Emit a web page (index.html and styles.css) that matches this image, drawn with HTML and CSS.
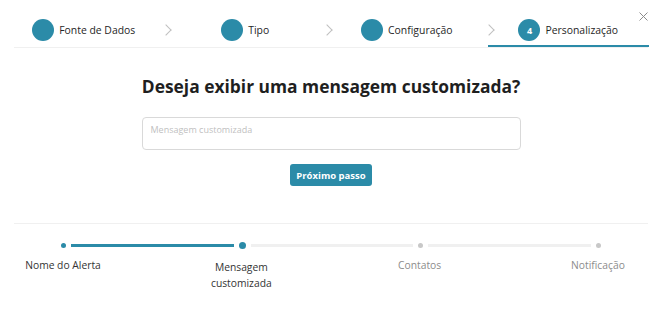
FILE: index.html
```html
<!DOCTYPE html>
<html lang="pt-BR">
<head>
  <meta charset="UTF-8" />
  <meta name="viewport" content="width=device-width, initial-scale=1.0" />
  <title>Personalização do alerta</title>
  <link rel="stylesheet" href="styles.css">
</head>
<body>
  <div class="modal">
    <!-- 닫기 버튼 -->
    <button class="close" aria-label="Fechar">
      <svg width="9" height="9" viewBox="0 0 9 9"><path d="M0.5 0.5 L8.5 8.5 M8.5 0.5 L0.5 8.5" stroke="#8c8c8c" stroke-width="1" fill="none"/></svg>
    </button>

    <!-- 상단 단계 -->
    <div class="nav-steps">
      <div class="nav-list">
        <div class="nav-item"><span class="nav-icon"></span><span class="nav-title">Fonte de Dados</span></div>
        <div class="nav-item"><span class="nav-icon"></span><span class="nav-title">Tipo</span></div>
        <div class="nav-item"><span class="nav-icon"></span><span class="nav-title">Configuração</span></div>
        <div class="nav-item active"><span class="nav-icon">4</span><span class="nav-title">Personalização</span></div>
      </div>
    </div>

    <!-- 본문 -->
    <div class="content">
      <h1>Deseja exibir uma mensagem customizada?</h1>
      <textarea class="message" placeholder="Mensagem customizada"></textarea>
      <button class="button">Próximo passo</button>
    </div>

    <!-- 하단 진행 -->
    <div class="progress">
      <div class="track">
        <span class="dot done"></span>
        <span class="line done"></span>
        <span class="dot current"></span>
        <span class="line"></span>
        <span class="dot"></span>
        <span class="line"></span>
        <span class="dot"></span>
      </div>
      <div class="labels">
        <div class="label done">Nome do Alerta</div>
        <div class="label current">Mensagem customizada</div>
        <div class="label">Contatos</div>
        <div class="label">Notificação</div>
      </div>
    </div>
  </div>
</body>
</html>
```

FILE: styles.css
```css
:root {
  --primary: #2b8ba8;
  --text-primary: #1f1f1f;
  --text-secondary: #595959;
  --text-muted: #8c8c8c;
  --border: #d9d9d9;
  --divider: #f0f0f0;
}
* {
  box-sizing: border-box;
  margin: 0;
  padding: 0;
}
body {
  font-family: "Open Sans", "Noto Sans", sans-serif;
  background: #ffffff;
  color: var(--text-primary);
}
.modal {
  position: relative;
  width: 662px;
  height: 325px;
}
.close {
  position: absolute;
  top: 12px;
  right: 14px;
  border: none;
  background: none;
  cursor: pointer;
  line-height: 0;
}
/* 상단 단계 */
.nav-steps {
  margin: 0 14px;
  border-bottom: 1px solid var(--divider);
}
.nav-list {
  display: flex;
  margin-left: -11px;
  width: 646px;
}
.nav-item {
  position: relative;
  flex: 1;
  display: flex;
  align-items: center;
  justify-content: center;
  gap: 5px;
  padding: 19px 0 4px;
  border-bottom: 2px solid transparent;
}
.nav-item:not(:last-child)::after {
  content: "";
  position: absolute;
  top: 26px;
  right: -5px;
  width: 7px;
  height: 7px;
  border-top: 1px solid #bfbfbf;
  border-right: 1px solid #bfbfbf;
  transform: rotate(45deg);
}
.nav-item.active {
  border-bottom-color: var(--primary);
}
.nav-icon {
  width: 22px;
  height: 22px;
  border-radius: 50%;
  background: var(--primary);
  color: #ffffff;
  font-size: 9px;
  font-weight: 700;
  display: flex;
  align-items: center;
  justify-content: center;
}
.nav-title {
  font-size: 10.4px;
  color: #262626;
  white-space: nowrap;
}
/* 본문 */
.content {
  display: flex;
  flex-direction: column;
  align-items: center;
  margin: 0 14px;
  padding: 26px 0 37px;
  border-bottom: 1px solid var(--divider);
}
h1 {
  font-size: 17.4px;
  font-weight: 700;
  line-height: 24px;
  color: var(--text-primary);
  margin-bottom: 19px;
}
.message {
  width: 379px;
  height: 33px;
  padding: 5px 8px;
  border: 1px solid var(--border);
  border-radius: 4px;
  resize: none;
  font-family: inherit;
  font-size: 9px;
  color: var(--text-primary);
  margin-bottom: 14px;
}
.message::placeholder {
  color: #bfbfbf;
}
.button {
  width: 82px;
  height: 22px;
  border: none;
  border-radius: 3px;
  background: var(--primary);
  color: #ffffff;
  font-family: inherit;
  font-size: 9.5px;
  font-weight: 700;
  cursor: pointer;
}
/* 하단 진행 */
.progress {
  margin: 18px 14px 0 13px;
}
.track {
  display: flex;
  align-items: center;
  margin: 0 47px 0 48px;
  height: 7px;
}
.dot {
  width: 5px;
  height: 5px;
  border-radius: 50%;
  background: #c8c8c8;
  flex: none;
}
.dot.done {
  background: var(--primary);
}
.dot.current {
  width: 7px;
  height: 7px;
  background: var(--primary);
}
.line {
  flex: 1;
  height: 3px;
  margin: 0 5px;
  background: #f0f0f0;
}
.line.done {
  background: var(--primary);
}
.labels {
  display: flex;
  justify-content: space-between;
  margin-top: 8px;
}
.label {
  width: 100px;
  text-align: center;
  font-size: 10.3px;
  line-height: 16px;
  color: var(--text-muted);
}
.label.done,
.label.current {
  color: #333333;
}
.label.current {
  padding: 2px 10px 0;
}
```
